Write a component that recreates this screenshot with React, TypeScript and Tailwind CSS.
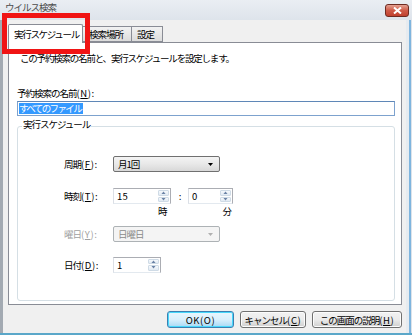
import React from "react";

const font = "font-['Noto_Sans_CJK_JP','Noto_Sans',sans-serif] text-[9.5px] tracking-[-1px] leading-[12px] text-black";

function L({ children }: { children: React.ReactNode }) {
  return <span className="tracking-[0.6px]">{children}</span>;
}

function Spin({ w, value }: { w: string; value: string }) {
  return (
    <div className={`${w} h-[16px] flex border border-[#abadb3] border-l-[#dbdfe6] border-b-[#e3e9ef] bg-white`}>
      <div className="flex-1 pl-[3px] flex items-center tracking-[0.3px]">{value}</div>
      <div className="w-[13px] flex flex-col gap-[1px] p-[1px]">
        <div className="flex-1 flex items-center justify-center rounded-[1px] border border-[#cfdbe6] bg-gradient-to-b from-[#f6f9fc] to-[#e1eaf3]">
          <svg width="5" height="3" viewBox="0 0 5 3"><path d="M0.5 3 L2.5 0.5 L4.5 3 Z" fill="#6a82a5" /></svg>
        </div>
        <div className="flex-1 flex items-center justify-center rounded-[1px] border border-[#cfdbe6] bg-gradient-to-b from-[#f6f9fc] to-[#e1eaf3]">
          <svg width="5" height="3" viewBox="0 0 5 3"><path d="M0.5 0 L2.5 2.5 L4.5 0 Z" fill="#6a82a5" /></svg>
        </div>
      </div>
    </div>
  );
}

function Select({ value, disabled }: { value: string; disabled?: boolean }) {
  return (
    <div
      className={
        disabled
          ? "w-[107px] h-[16px] flex items-center rounded-[2px] border border-[#adb2b5] bg-[#f4f4f4] text-[#8a8a8a] pl-[4px] pr-[6px]"
          : "w-[107px] h-[16px] flex items-center rounded-[2px] border border-[#707070] bg-gradient-to-b from-[#f4f4f4] via-[#e8e8e8] to-[#d8d8d8] pl-[4px] pr-[6px]"
      }
    >
      <span className="flex-1">{value}</span>
      <svg width="5" height="3" viewBox="0 0 5 3">
        <path d="M0 0 L5 0 L2.5 3 Z" fill={disabled ? "#b0b0b0" : "#000"} />
      </svg>
    </div>
  );
}

function Btn({ w, children, focus }: { w: string; children: React.ReactNode; focus?: boolean }) {
  return (
    <div
      className={
        focus
          ? `${w} h-[17px] flex items-center justify-center rounded-[3px] border border-[#3c7fb1] bg-gradient-to-b from-[#eaf6fd] via-[#d9f0fc] to-[#a7d9f5] shadow-[inset_0_0_0_1px_#48d8fb]`
          : `${w} h-[17px] flex items-center justify-center rounded-[3px] border border-[#707070] bg-gradient-to-b from-[#f2f2f2] via-[#ebebeb] to-[#cfcfcf] shadow-[inset_0_0_0_1px_#fcfcfc]`
      }
    >
      {children}
    </div>
  );
}

export default function App() {
  return (
    <div className={`relative w-[412px] h-[335px] overflow-hidden flex flex-col bg-[#dde3ea] ${font}`}>
      {/* title bar */}
      <div className="h-[20px] flex items-start bg-gradient-to-b from-[#eaeef3] to-[#dee4eb]">
        <div className="pl-[5px] pt-[1px] text-[#4a4a4a]">ウイルス検索</div>
        <div className="ml-auto mr-[3px] mt-[4px] w-[24px] h-[13px] rounded-[3px] border border-[#6e2b22] bg-gradient-to-b from-[#e3a193] via-[#cf5a48] to-[#c0402e] flex items-center justify-center">
          <svg width="9" height="7" viewBox="0 0 9 7">
            <path d="M1 0.5 L8 6.5 M8 0.5 L1 6.5" stroke="#fff" strokeWidth="2" />
          </svg>
        </div>
      </div>

      <div className="flex h-[313px]">
        <div className="w-[3px] bg-[#a3aab2]" />
        <div className="w-[403px] bg-[#f0f0f0] flex flex-col">
          {/* tabs */}
          <div className="pt-[3px] pl-[5px] flex items-end h-[22px]">
            <div className="relative z-10 w-[75px] h-[19px] -mb-[1px] border border-b-0 border-[#898c95] bg-white rounded-t-[2px] pl-[5px] flex items-center tracking-[-1.3px]">
              実行スケジュール
            </div>
            <div className="w-[49px] h-[16px] border border-l-0 border-[#898c95] bg-gradient-to-b from-[#f2f2f2] to-[#dcdcdc] pl-[6px] flex items-center">
              検索場所
            </div>
            <div className="w-[31px] h-[16px] border border-l-0 border-[#898c95] bg-gradient-to-b from-[#f2f2f2] to-[#dcdcdc] pl-[5px] flex items-center">
              設定
            </div>
          </div>

          {/* panel */}
          <div className="ml-[5px] w-[394px] h-[263px] border border-[#898c95] bg-white flex flex-col">
            <p className="mt-[9px] ml-[11px] h-[12px] tracking-[-1.2px]">この予約検索の名前と、実行スケジュールを設定します。</p>
            <p className="mt-[23px] ml-[8px] h-[12px]">
              予約検索の名前<L>(<span className="underline">N</span>):</L>
            </p>
            <div className="mt-[2px] ml-[8px] w-[378px] h-[15px] border border-[#7da2ce] border-t-[#5f87b7] bg-white flex items-center pl-[1px]">
              <span className="bg-[#3399ff] text-white tracking-[-1.6px] pr-[2px] h-[11px] leading-[11px]">すべてのファイル</span>
            </div>

            {/* group box */}
            <div className="mt-[10px] ml-[8px] w-[378px] h-[175px] border border-[#d5dfe5] rounded-[3px] flex flex-col">
              <div className="-mt-[9px] ml-[4px] px-[1px] w-fit bg-white h-[12px]">実行スケジュール</div>

              <div className="mt-[26px] pl-[46px] flex items-center h-[16px]">
                <div className="w-[49px]">
                  周期<L>(<span className="underline">F</span>):</L>
                </div>
                <Select value="月1回" />
              </div>

              <div className="mt-[16px] pl-[46px] flex items-center h-[16px]">
                <div className="w-[49px]">
                  時刻<L>(<span className="underline">T</span>):</L>
                </div>
                <Spin w="w-[58px]" value="15" />
                <div className="w-[17px] text-center">:</div>
                <Spin w="w-[45px]" value="0" />
              </div>

              <div className="mt-[1px] pl-[140px] flex h-[12px]">
                <span>時</span>
                <span className="ml-[56px]">分</span>
              </div>

              <div className="mt-[9px] pl-[46px] flex items-center h-[16px]">
                <div className="w-[49px] text-[#a0a0a0]">
                  曜日<L>(<span className="underline">Y</span>):</L>
                </div>
                <Select value="日曜日" disabled />
              </div>

              <div className="mt-[15px] pl-[46px] flex items-center h-[15px]">
                <div className="w-[49px]">
                  日付<L>(<span className="underline">D</span>):</L>
                </div>
                <Spin w="w-[48px]" value="1" />
              </div>
            </div>
          </div>

          {/* buttons */}
          <div className="mt-[6px] pr-[4px] flex justify-end gap-[6px]">
            <Btn w="w-[67px]" focus><L>OK(O)</L></Btn>
            <Btn w="w-[66px]">
              キャンセル<L>(<span className="underline">C</span>)</L>
            </Btn>
            <Btn w="w-[90px]">
              この画面の説明<L>(<span className="underline">H</span>)</L>
            </Btn>
          </div>
        </div>
        <div className="w-[3px] bg-[#e6ebf0]" />
        <div className="w-[2px] bg-[#7fb5de]" />
        <div className="w-[1px] bg-[#dde3ea]" />
      </div>
      <div className="h-[2px] bg-[#5aa7c9]" />

      {/* red annotation */}
      <div className="absolute left-[2px] top-[13px] w-[88px] h-[41px] border-[5px] border-[#f01414]" />
    </div>
  );
}
